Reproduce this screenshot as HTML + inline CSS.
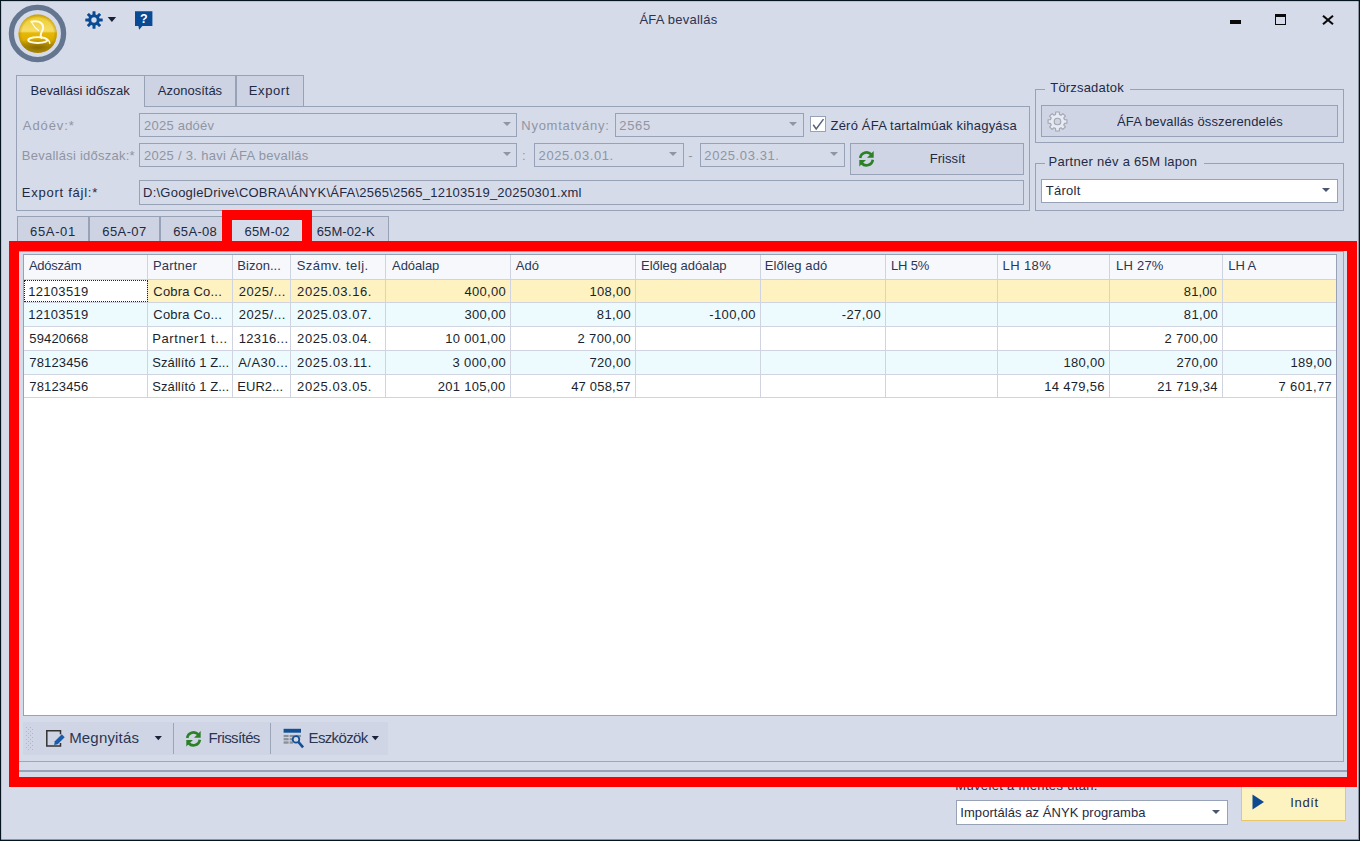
<!DOCTYPE html>
<html lang="hu">
<head>
<meta charset="utf-8">
<title>ÁFA bevallás</title>
<style>
*{box-sizing:border-box;margin:0;padding:0}
html,body{width:1360px;height:841px;overflow:hidden}
body{background:#d6dbe9;font-family:"Liberation Sans",sans-serif;font-size:13px;color:#1e2a44;position:relative}
.a{position:absolute}
.t{position:absolute;white-space:nowrap;line-height:16px;height:16px;transform:scaleY(1.05);transform-origin:0 12.5px}
.dis{color:#8f95a3}
.hdc{color:#2a3655}
.cel{color:#1a1f2e}
.bx{position:absolute;border:1px solid #97a2b6}
.fld{position:absolute;border:1px solid #97a2b6;background:#d6dbe9}
.btn{position:absolute;border:1px solid #97a2b6;background:#cfd5e4}
.wh{background:#fff}
.arr{position:absolute;width:0;height:0;border-left:4px solid transparent;border-right:4px solid transparent;border-top:4px solid #8f95a3}
.arr.dk{border-top-color:#4a566e}
#frame{left:0;top:0;width:1360px;height:841px;border:1px solid #06141f;box-shadow:inset -1px -1px 0 0 rgba(6,20,31,0.35), inset 1px 1px 0 0 rgba(6,20,31,0.12);pointer-events:none;z-index:50}
.tab{position:absolute;border:1px solid #97a2b6;border-bottom:none;background:#cdd3e2}
.tab.act{background:#d6dbe9}
#grid{left:23px;top:254px;width:1314px;height:462px;border:1px solid #97a2b6;background:#fff;overflow:hidden}
.row{position:absolute;left:0;width:1312px;border-bottom:1px solid #cfd4e0}
.c{position:absolute;top:0;height:100%;border-right:1px solid #cfd4e0}
.tb{font-size:15px;line-height:18px;height:18px;color:#2b3653;transform:none}
.red{position:absolute;background:#fe0000;z-index:40}
</style>
</head>
<body>
<svg class="a" style="left:6px;top:2px" width="64" height="64" viewBox="0 0 64 64">
  <defs>
    <linearGradient id="gold" x1="0" y1="0" x2="0" y2="1">
      <stop offset="0" stop-color="#e6be15"/>
      <stop offset="0.12" stop-color="#f0cf38"/>
      <stop offset="0.40" stop-color="#f5dc66"/>
      <stop offset="0.44" stop-color="#f3d856"/>
      <stop offset="0.48" stop-color="#e6b808"/>
      <stop offset="0.66" stop-color="#dcae02"/>
      <stop offset="0.85" stop-color="#c29a03"/>
      <stop offset="1" stop-color="#cfa70a"/>
    </linearGradient>
    <radialGradient id="goldedge" cx="0.5" cy="0.5" r="0.5">
      <stop offset="0.82" stop-color="#a07c00" stop-opacity="0"/>
      <stop offset="1" stop-color="#a07c00" stop-opacity="0.5"/>
    </radialGradient>
    <radialGradient id="goldshade" cx="0.5" cy="0.86" r="0.42" gradientTransform="translate(0.5 0.86) scale(1.5 0.55) translate(-0.5 -0.86)">
      <stop offset="0" stop-color="#6f5600" stop-opacity="0.7"/>
      <stop offset="1" stop-color="#6f5600" stop-opacity="0"/>
    </radialGradient>
  </defs>
  <circle cx="31.5" cy="31.5" r="26.1" fill="none" stroke="#64768f" stroke-width="5.3"/>
  <circle cx="31.7" cy="31.8" r="19.2" fill="url(#gold)"/>
  <circle cx="31.7" cy="31.8" r="19.2" fill="url(#goldshade)"/>
  <circle cx="31.7" cy="31.8" r="19.2" fill="url(#goldedge)"/>
  <path d="M25.3 19.7c3.500-0.600 7.500-0.400 9.600 1.200c2.300 1.800 2.600 4.300 1.800 6.800c-0.800 2.400-2.600 4-2 6.500c0.200 0.900 0.500 1.400 0.800 1.800" fill="none" stroke="#fffbe8" stroke-width="2" stroke-linecap="round"/>
  <path d="M25.3 19.7c0.300 1.200 0.800 1.900 1.500 2.500c1.300 2.500 3.300 4.600 5.700 6.300" fill="none" stroke="#fffbe8" stroke-width="1.100" stroke-linecap="round"/>
  <ellipse cx="31.7" cy="38.1" rx="9.6" ry="2.9" fill="none" stroke="#fffbe8" stroke-width="1.800"/>
  <path d="M40.2 36.900c2 0.700 3.400 2.300 3.700 4.500" fill="none" stroke="#fffbe8" stroke-width="1.300" stroke-linecap="round"/>
</svg>
<svg class="a" style="left:83.700px;top:9.850px" width="20" height="20" viewBox="0 0 20 20">
  <g fill="#084a94">
    <circle cx="10" cy="10" r="5.800"/>
    <rect x="8.500" y="1.300" width="3" height="17.400" rx="0.500"/>
    <rect x="8.500" y="1.300" width="3" height="17.400" rx="0.500" transform="rotate(45 10 10)"/>
    <rect x="8.500" y="1.300" width="3" height="17.400" rx="0.500" transform="rotate(90 10 10)"/>
    <rect x="8.500" y="1.300" width="3" height="17.400" rx="0.500" transform="rotate(135 10 10)"/>
  </g>
  <circle cx="10" cy="10" r="2.700" fill="#d6dbe9"/>
</svg>
<svg class="a" style="left:107px;top:16px" width="10" height="7" viewBox="0 0 10 7"><path d="M0.700 1h8.400l-4.200 5z" fill="#1a2238"/></svg>
<svg class="a" style="left:135px;top:11px" width="18" height="20" viewBox="0 0 18 20">
  <path d="M0 0.200h17.400v14.700h-10l-3.300 3.800l-0.700-3.800h-3.400z" fill="#084a94"/>
  <text x="8.800" y="12.200" text-anchor="middle" font-family="Liberation Sans, sans-serif" font-weight="bold" font-size="12.500" fill="#fff">?</text>
</svg>
<div class="a" style="left:1230px;top:20px;width:11px;height:4px;background:#0a0a0a"></div>
<div class="a" style="left:1275px;top:14px;width:11px;height:11px;border:1px solid #0a0a0a;border-top-width:3px"></div>
<svg class="a" style="left:1322px;top:14.500px" width="12" height="10" viewBox="0 0 12 10"><path d="M1 0.800l10 8.400M11 0.800l-10 8.400" stroke="#0a0a0a" stroke-width="2.100" fill="none"/></svg>
<div class="bx" style="left:16px;top:106px;width:1014px;height:105px"></div>
<div class="tab act" style="left:16px;top:75px;width:129px;height:32px"></div>
<div class="tab" style="left:144px;top:75px;width:92px;height:31px"></div>
<div class="tab" style="left:236px;top:75px;width:68px;height:31px"></div>
<div class="fld" style="left:139px;top:113px;width:378px;height:24px"></div>
<div class="arr" style="left:503px;top:122px"></div>
<div class="fld" style="left:615px;top:113px;width:189px;height:24px"></div>
<div class="arr" style="left:789px;top:122px"></div>
<div class="a wh" style="left:810px;top:116px;width:16px;height:16px;border:1px solid #97a2b6"></div>
<svg class="a" style="left:810px;top:116px" width="16" height="16" viewBox="0 0 16 16"><path d="M3.200 8.700l3 4.200l7.300-9.800" fill="none" stroke="#56617c" stroke-width="1.500"/></svg>
<div class="fld" style="left:139px;top:143px;width:378px;height:24px"></div>
<div class="arr" style="left:503px;top:152px"></div>
<div class="fld" style="left:534px;top:143px;width:150px;height:24px"></div>
<div class="arr" style="left:669px;top:152px"></div>
<div class="fld" style="left:700px;top:143px;width:145px;height:24px"></div>
<div class="arr" style="left:830px;top:152px"></div>
<div class="btn" style="left:850px;top:143px;width:174px;height:32px"></div>
<svg class="a" style="left:856.7px;top:149.7px" width="19" height="17.7" viewBox="0 0 16 16"><g fill="none" stroke="#2c8026" stroke-width="2.400"><path d="M2.300 7.200a5.800 5.800 0 0 1 10-3.200"/><path d="M13.700 8.800a5.800 5.800 0 0 1-10 3.200"/></g><path d="M14.500 1v6h-6z" fill="#2c8026"/><path d="M1.500 15v-6h6z" fill="#2c8026"/></svg>
<div class="fld" style="left:139px;top:180px;width:885px;height:25px"></div>
<div class="bx" style="left:1035px;top:89px;width:309px;height:54px"></div>
<div class="a" style="left:1045px;top:88px;width:85px;height:3px;background:#d6dbe9"></div>
<div class="btn" style="left:1041px;top:105px;width:297px;height:32px"></div>
<svg class="a" style="left:1047px;top:110.500px" width="21" height="21" viewBox="0 0 21 21"><path d="M8.58 3.56L8.69 1.07L12.31 1.07L12.42 3.56L14.05 4.24L15.88 2.55L18.45 5.12L16.76 6.95L17.44 8.58L19.93 8.69L19.93 12.31L17.44 12.42L16.76 14.05L18.45 15.88L15.88 18.45L14.05 16.76L12.42 17.44L12.31 19.93L8.69 19.93L8.58 17.44L6.95 16.76L5.12 18.45L2.55 15.88L4.24 14.05L3.56 12.42L1.07 12.31L1.07 8.69L3.56 8.58L4.24 6.95L2.55 5.12L5.12 2.55L6.95 4.24z" fill="#e6ebf6" stroke="#a3a5ae" stroke-width="1.100" stroke-linejoin="round"/><circle cx="10.500" cy="10.500" r="3.300" fill="#cfd5e4" stroke="#a3a5ae" stroke-width="1.100"/></svg>
<div class="bx" style="left:1035px;top:163px;width:309px;height:48px"></div>
<div class="a" style="left:1045px;top:162px;width:159px;height:3px;background:#d6dbe9"></div>
<div class="fld wh" style="left:1041px;top:179px;width:297px;height:24px"></div>
<div class="arr dk" style="left:1322px;top:188px;border-left-width:4.500px;border-right-width:4.500px;border-top-width:4.500px"></div>
<div class="tab" style="left:17px;top:216px;width:72px;height:36px"></div>
<div class="tab" style="left:89px;top:216px;width:71px;height:36px"></div>
<div class="tab" style="left:160px;top:216px;width:72px;height:36px"></div>
<div class="tab act" style="left:230px;top:216px;width:73px;height:36px"></div>
<div class="tab" style="left:311px;top:216px;width:78px;height:36px"></div>
<div class="bx" style="left:17px;top:251px;width:1327px;height:511px;border-color:#9ca7ba"></div><div class="a" style="left:17px;top:770px;width:1330px;height:2px;background:#98a3b7"></div>
<div id="grid" class="a">
<div class="row" style="top:0;height:25px;background:#f7f8fc">
<div class="c" style="left:0px;width:124px"></div>
<div class="c" style="left:124px;width:85px"></div>
<div class="c" style="left:209px;width:58px"></div>
<div class="c" style="left:267px;width:95px"></div>
<div class="c" style="left:362px;width:125px"></div>
<div class="c" style="left:487px;width:125px"></div>
<div class="c" style="left:612px;width:125px"></div>
<div class="c" style="left:737px;width:125px"></div>
<div class="c" style="left:862px;width:112px"></div>
<div class="c" style="left:974px;width:112px"></div>
<div class="c" style="left:1086px;width:113px"></div>
<div class="c" style="left:1199px;width:114px"></div>
</div>
<div class="row" style="top:25px;height:23px;background:#fef2c0">
<div class="c" style="left:0px;width:124px;background:#fff;outline:1px dotted #222;outline-offset:-1px"></div>
<div class="c" style="left:124px;width:85px"></div>
<div class="c" style="left:209px;width:58px"></div>
<div class="c" style="left:267px;width:95px"></div>
<div class="c" style="left:362px;width:125px"></div>
<div class="c" style="left:487px;width:125px"></div>
<div class="c" style="left:612px;width:125px"></div>
<div class="c" style="left:737px;width:125px"></div>
<div class="c" style="left:862px;width:112px"></div>
<div class="c" style="left:974px;width:112px"></div>
<div class="c" style="left:1086px;width:113px"></div>
<div class="c" style="left:1199px;width:114px"></div>
</div>
<div class="row" style="top:48px;height:24px;background:#edfbff">
<div class="c" style="left:0px;width:124px"></div>
<div class="c" style="left:124px;width:85px"></div>
<div class="c" style="left:209px;width:58px"></div>
<div class="c" style="left:267px;width:95px"></div>
<div class="c" style="left:362px;width:125px"></div>
<div class="c" style="left:487px;width:125px"></div>
<div class="c" style="left:612px;width:125px"></div>
<div class="c" style="left:737px;width:125px"></div>
<div class="c" style="left:862px;width:112px"></div>
<div class="c" style="left:974px;width:112px"></div>
<div class="c" style="left:1086px;width:113px"></div>
<div class="c" style="left:1199px;width:114px"></div>
</div>
<div class="row" style="top:72px;height:24px;background:#ffffff">
<div class="c" style="left:0px;width:124px"></div>
<div class="c" style="left:124px;width:85px"></div>
<div class="c" style="left:209px;width:58px"></div>
<div class="c" style="left:267px;width:95px"></div>
<div class="c" style="left:362px;width:125px"></div>
<div class="c" style="left:487px;width:125px"></div>
<div class="c" style="left:612px;width:125px"></div>
<div class="c" style="left:737px;width:125px"></div>
<div class="c" style="left:862px;width:112px"></div>
<div class="c" style="left:974px;width:112px"></div>
<div class="c" style="left:1086px;width:113px"></div>
<div class="c" style="left:1199px;width:114px"></div>
</div>
<div class="row" style="top:96px;height:24px;background:#edfbff">
<div class="c" style="left:0px;width:124px"></div>
<div class="c" style="left:124px;width:85px"></div>
<div class="c" style="left:209px;width:58px"></div>
<div class="c" style="left:267px;width:95px"></div>
<div class="c" style="left:362px;width:125px"></div>
<div class="c" style="left:487px;width:125px"></div>
<div class="c" style="left:612px;width:125px"></div>
<div class="c" style="left:737px;width:125px"></div>
<div class="c" style="left:862px;width:112px"></div>
<div class="c" style="left:974px;width:112px"></div>
<div class="c" style="left:1086px;width:113px"></div>
<div class="c" style="left:1199px;width:114px"></div>
</div>
<div class="row" style="top:120px;height:23px;background:#ffffff">
<div class="c" style="left:0px;width:124px"></div>
<div class="c" style="left:124px;width:85px"></div>
<div class="c" style="left:209px;width:58px"></div>
<div class="c" style="left:267px;width:95px"></div>
<div class="c" style="left:362px;width:125px"></div>
<div class="c" style="left:487px;width:125px"></div>
<div class="c" style="left:612px;width:125px"></div>
<div class="c" style="left:737px;width:125px"></div>
<div class="c" style="left:862px;width:112px"></div>
<div class="c" style="left:974px;width:112px"></div>
<div class="c" style="left:1086px;width:113px"></div>
<div class="c" style="left:1199px;width:114px"></div>
</div>
</div>
<div class="a" style="left:23px;top:722px;width:365px;height:33px;background:#cfd5e4"></div>
<svg class="a" style="left:26px;top:727px" width="7" height="23" viewBox="0 0 7 23"><g fill="#aeb7c9"><rect x="0" y="0" width="1" height="1"/><rect x="4" y="0" width="1" height="1"/><rect x="2" y="2" width="1" height="1"/><rect x="6" y="2" width="1" height="1"/><rect x="0" y="4" width="1" height="1"/><rect x="4" y="4" width="1" height="1"/><rect x="2" y="6" width="1" height="1"/><rect x="6" y="6" width="1" height="1"/><rect x="0" y="8" width="1" height="1"/><rect x="4" y="8" width="1" height="1"/><rect x="2" y="10" width="1" height="1"/><rect x="6" y="10" width="1" height="1"/><rect x="0" y="12" width="1" height="1"/><rect x="4" y="12" width="1" height="1"/><rect x="2" y="14" width="1" height="1"/><rect x="6" y="14" width="1" height="1"/><rect x="0" y="16" width="1" height="1"/><rect x="4" y="16" width="1" height="1"/><rect x="2" y="18" width="1" height="1"/><rect x="6" y="18" width="1" height="1"/><rect x="0" y="20" width="1" height="1"/><rect x="4" y="20" width="1" height="1"/><rect x="2" y="22" width="1" height="1"/><rect x="6" y="22" width="1" height="1"/></g></svg>
<svg class="a" style="left:45px;top:729px" width="21" height="19" viewBox="0 0 21 19"><path d="M15.500 5.200v-3.500h-13.700v15.400h13.700v-3" fill="none" stroke="#333" stroke-width="1.500"/><path d="M16.800 5.300l2.900 2.900l-7 7l-3.600 0.800l0.700-3.700z" fill="#1a5ca8"/></svg>
<svg class="a" style="left:154px;top:735px" width="9" height="6" viewBox="0 0 9 6"><path d="M0.700 1h7.200l-3.600 4.200z" fill="#1a2238"/></svg>
<div class="a" style="left:173px;top:723px;width:1px;height:31px;background:#9aa5b8"></div>
<svg class="a" style="left:184.2px;top:729.8px" width="19" height="17.7" viewBox="0 0 16 16"><g fill="none" stroke="#2c8026" stroke-width="2.400"><path d="M2.300 7.200a5.800 5.800 0 0 1 10-3.200"/><path d="M13.700 8.800a5.800 5.800 0 0 1-10 3.200"/></g><path d="M14.500 1v6h-6z" fill="#2c8026"/><path d="M1.500 15v-6h6z" fill="#2c8026"/></svg>
<div class="a" style="left:270px;top:723px;width:1px;height:31px;background:#9aa5b8"></div>
<svg class="a" style="left:283px;top:728px" width="22" height="21" viewBox="0 0 22 21"><rect x="0.600" y="0.800" width="17.400" height="3.900" fill="#134f94"/><g fill="#8a8f98"><rect x="0.600" y="6.900" width="5" height="2.200"/><rect x="6.600" y="6.900" width="5" height="2.200"/><rect x="12.600" y="6.900" width="5.400" height="2.200"/><rect x="0.600" y="10.100" width="5" height="2.200"/><rect x="6.600" y="10.100" width="3" height="2.200"/><rect x="0.600" y="13.400" width="5" height="2.300"/><rect x="6.600" y="13.400" width="3.500" height="2.300"/></g><circle cx="13" cy="11.400" r="3.300" fill="#d3d9e7" stroke="#134f94" stroke-width="1.800"/><path d="M15.300 13.900l4.800 5.500" stroke="#134f94" stroke-width="2.600" fill="none"/></svg>
<svg class="a" style="left:370.500px;top:735px" width="9" height="6" viewBox="0 0 9 6"><path d="M0.700 1h7.200l-3.600 4.200z" fill="#1a2238"/></svg>
<div class="red" style="left:9px;top:241px;width:1348px;height:10px"></div>
<div class="red" style="left:9px;top:777px;width:1348px;height:10px"></div>
<div class="red" style="left:9px;top:241px;width:10px;height:546px"></div>
<div class="red" style="left:1347px;top:241px;width:10px;height:546px"></div>
<div class="red" style="left:222px;top:210px;width:90px;height:10px"></div>
<div class="red" style="left:222px;top:210px;width:10px;height:32px"></div>
<div class="red" style="left:302px;top:210px;width:10px;height:32px"></div>
<div class="fld wh" style="left:956px;top:800px;width:272px;height:25px"></div>
<div class="arr dk" style="left:1212px;top:810px;border-left-width:4.500px;border-right-width:4.500px;border-top-width:4.500px"></div>
<div class="a" style="left:1241px;top:780px;width:105px;height:41px;background:#fdf3c0;border:1px solid #e8c66a"></div>
<svg class="a" style="left:1252px;top:794px" width="13" height="16" viewBox="0 0 13 16"><path d="M0.500 0.500l11.500 7.500l-11.500 7.500z" fill="#0d4a8f"/></svg>
<div id="frame" class="a"></div>
<div id="t0" class="t" style="left:639.40px;top:11.80px;letter-spacing:0.236px;color:#2b3350">ÁFA bevallás</div>
<div id="t1" class="t" style="left:30.55px;top:82.50px;letter-spacing:-0.032px">Bevallási időszak</div>
<div id="t2" class="t" style="left:157.80px;top:82.50px">Azonosítás</div>
<div id="t3" class="t" style="left:248.80px;top:82.50px;letter-spacing:0.600px">Export</div>
<div id="t4" class="t dis" style="left:22.80px;top:117.50px;letter-spacing:0.917px">Adóév:*</div>
<div id="t5" class="t dis" style="left:144.05px;top:117.50px;letter-spacing:0.222px">2025 adóév</div>
<div id="t6" class="t dis" style="left:521.30px;top:117.50px;letter-spacing:0.727px">Nyomtatvány:</div>
<div id="t7" class="t dis" style="left:619.30px;top:117.50px;letter-spacing:0.667px">2565</div>
<div id="t8" class="t" style="left:830.55px;top:117.50px;letter-spacing:0.196px">Zéró ÁFA tartalmúak kihagyása</div>
<div id="t9" class="t dis" style="left:21.80px;top:147.50px;letter-spacing:0.250px">Bevallási időszak:*</div>
<div id="t10" class="t dis" style="left:144.05px;top:147.50px;letter-spacing:0.288px">2025 / 3. havi ÁFA bevallás</div>
<div id="t11" class="t dis" style="left:521.90px;top:147.50px">:</div>
<div id="t12" class="t dis" style="left:538.55px;top:147.50px;letter-spacing:0.600px">2025.03.01.</div>
<div id="t13" class="t dis" style="left:688.30px;top:147.50px">-</div>
<div id="t14" class="t dis" style="left:704.30px;top:147.50px;letter-spacing:0.600px">2025.03.31.</div>
<div id="t15" class="t" style="left:929.80px;top:151.25px">Frissít</div>
<div id="t16" class="t" style="left:21.80px;top:184.50px;letter-spacing:0.750px">Export fájl:*</div>
<div id="t17" class="t" style="left:143.05px;top:184.50px;letter-spacing:0.225px">D:\GoogleDrive\COBRA\ÁNYK\ÁFA\2565\2565_12103519_20250301.xml</div>
<div id="t18" class="t" style="left:1050.30px;top:80.00px;letter-spacing:0.180px">Törzsadatok</div>
<div id="t19" class="t" style="left:1117.00px;top:114.00px;letter-spacing:0.128px">ÁFA bevallás összerendelés</div>
<div id="t20" class="t" style="left:1048.50px;top:153.75px;letter-spacing:0.282px">Partner név a 65M lapon</div>
<div id="t21" class="t" style="left:1045.70px;top:183.10px;letter-spacing:0.280px">Tárolt</div>
<div id="t22" class="t" style="left:30.10px;top:223.50px;letter-spacing:0.640px">65A-01</div>
<div id="t23" class="t" style="left:102.30px;top:223.50px;letter-spacing:0.400px">65A-07</div>
<div id="t24" class="t" style="left:173.30px;top:223.50px;letter-spacing:0.320px">65A-08</div>
<div id="t25" class="t" style="left:244.50px;top:223.50px;letter-spacing:0.200px">65M-02</div>
<div id="t26" class="t" style="left:316.70px;top:223.50px;letter-spacing:0.115px">65M-02-K</div>
<div id="t27" class="t hdc" style="left:28.90px;top:257.80px;letter-spacing:-0.234px">Adószám</div>
<div id="t28" class="t hdc" style="left:152.90px;top:257.80px;letter-spacing:0.200px">Partner</div>
<div id="t29" class="t hdc" style="left:237.30px;top:257.80px;letter-spacing:0.029px">Bizon...</div>
<div id="t30" class="t hdc" style="left:296.70px;top:257.80px;letter-spacing:0.473px">Számv. telj.</div>
<div id="t31" class="t hdc" style="left:392.05px;top:257.80px;letter-spacing:-0.084px">Adóalap</div>
<div id="t32" class="t hdc" style="left:515.85px;top:257.80px">Adó</div>
<div id="t33" class="t hdc" style="left:641.05px;top:257.80px;letter-spacing:-0.039px">Előleg adóalap</div>
<div id="t34" class="t hdc" style="left:764.80px;top:257.80px;letter-spacing:0.112px">Előleg adó</div>
<div id="t35" class="t hdc" style="left:891.05px;top:257.80px;letter-spacing:-0.176px">LH 5%</div>
<div id="t36" class="t hdc" style="left:1002.50px;top:257.80px;letter-spacing:0.400px">LH 18%</div>
<div id="t37" class="t hdc" style="left:1116.05px;top:257.80px;letter-spacing:0.220px">LH 27%</div>
<div id="t38" class="t hdc" style="left:1228.35px;top:257.80px;letter-spacing:-0.100px">LH A</div>
<div id="t39" class="t cel" style="left:28.30px;top:283.50px;letter-spacing:0.286px">12103519</div>
<div id="t40" class="t cel" style="left:153.30px;top:283.50px;letter-spacing:0.200px">Cobra Co...</div>
<div id="t41" class="t cel" style="left:238.70px;top:283.50px;letter-spacing:0.486px">2025/...</div>
<div id="t42" class="t cel" style="left:297.10px;top:283.50px;letter-spacing:0.560px">2025.03.16.</div>
<div id="t43" class="t cel" style="left:464.55px;top:283.50px;letter-spacing:0.260px">400,00</div>
<div id="t44" class="t cel" style="left:589.55px;top:283.50px;letter-spacing:0.260px">108,00</div>
<div id="t45" class="t cel" style="left:1183.87px;top:283.50px;letter-spacing:0.106px">81,00</div>
<div id="t46" class="t cel" style="left:28.30px;top:307.20px;letter-spacing:0.286px">12103519</div>
<div id="t47" class="t cel" style="left:153.30px;top:307.20px;letter-spacing:0.200px">Cobra Co...</div>
<div id="t48" class="t cel" style="left:238.70px;top:307.20px;letter-spacing:0.486px">2025/...</div>
<div id="t49" class="t cel" style="left:297.10px;top:307.20px;letter-spacing:0.560px">2025.03.07.</div>
<div id="t50" class="t cel" style="left:464.55px;top:307.20px;letter-spacing:0.260px">300,00</div>
<div id="t51" class="t cel" style="left:596.87px;top:307.20px;letter-spacing:0.356px">81,00</div>
<div id="t52" class="t cel" style="left:709.35px;top:307.20px;letter-spacing:0.350px">-100,00</div>
<div id="t53" class="t cel" style="left:841.67px;top:307.20px;letter-spacing:0.444px">-27,00</div>
<div id="t54" class="t cel" style="left:1183.87px;top:307.20px;letter-spacing:0.356px">81,00</div>
<div id="t55" class="t cel" style="left:29.30px;top:331.00px;letter-spacing:0.143px">59420668</div>
<div id="t56" class="t cel" style="left:152.30px;top:331.00px;letter-spacing:0.583px">Partner1 t...</div>
<div id="t57" class="t cel" style="left:238.70px;top:331.00px;letter-spacing:0.343px">12316...</div>
<div id="t58" class="t cel" style="left:297.10px;top:331.00px;letter-spacing:0.560px">2025.03.04.</div>
<div id="t59" class="t cel" style="left:445.16px;top:331.00px;letter-spacing:0.319px">10 001,00</div>
<div id="t60" class="t cel" style="left:577.48px;top:331.00px;letter-spacing:0.382px">2 700,00</div>
<div id="t61" class="t cel" style="left:1164.48px;top:331.00px;letter-spacing:0.382px">2 700,00</div>
<div id="t62" class="t cel" style="left:29.30px;top:355.10px;letter-spacing:0.143px">78123456</div>
<div id="t63" class="t cel" style="left:152.30px;top:355.10px;letter-spacing:0.071px">Szállító 1 Z...</div>
<div id="t64" class="t cel" style="left:238.20px;top:355.10px;letter-spacing:0.486px">A/A30...</div>
<div id="t65" class="t cel" style="left:297.10px;top:355.10px;letter-spacing:0.660px">2025.03.11.</div>
<div id="t66" class="t cel" style="left:452.48px;top:355.10px;letter-spacing:0.382px">3 000,00</div>
<div id="t67" class="t cel" style="left:589.55px;top:355.10px;letter-spacing:0.260px">720,00</div>
<div id="t68" class="t cel" style="left:1063.55px;top:355.10px;letter-spacing:0.260px">180,00</div>
<div id="t69" class="t cel" style="left:1176.55px;top:355.10px;letter-spacing:0.260px">270,00</div>
<div id="t70" class="t cel" style="left:1290.55px;top:355.10px;letter-spacing:0.260px">189,00</div>
<div id="t71" class="t cel" style="left:29.30px;top:378.50px;letter-spacing:0.143px">78123456</div>
<div id="t72" class="t cel" style="left:152.30px;top:378.50px;letter-spacing:0.071px">Szállító 1 Z...</div>
<div id="t73" class="t cel" style="left:237.20px;top:378.50px;letter-spacing:0.067px">EUR2...</div>
<div id="t74" class="t cel" style="left:297.10px;top:378.50px;letter-spacing:0.560px">2025.03.05.</div>
<div id="t75" class="t cel" style="left:437.84px;top:378.50px;letter-spacing:0.271px">201 105,00</div>
<div id="t76" class="t cel" style="left:571.16px;top:378.50px;letter-spacing:0.194px">47 058,57</div>
<div id="t77" class="t cel" style="left:1044.16px;top:378.50px;letter-spacing:0.319px">14 479,56</div>
<div id="t78" class="t cel" style="left:1157.16px;top:378.50px;letter-spacing:0.319px">21 719,34</div>
<div id="t79" class="t cel" style="left:1278.48px;top:378.50px;letter-spacing:0.382px">7 601,77</div>
<div id="t80" class="t tb" style="left:69.20px;top:728.90px;letter-spacing:0.175px">Megnyitás</div>
<div id="t81" class="t tb" style="left:208.50px;top:728.90px;letter-spacing:-0.600px">Frissítés</div>
<div id="t82" class="t tb" style="left:308.50px;top:728.90px;letter-spacing:-0.629px">Eszközök</div>
<div id="t83" class="t" style="left:955.30px;top:778.00px;letter-spacing:0.333px">Művelet a mentés után:</div>
<div id="t84" class="t" style="left:960.30px;top:804.50px;letter-spacing:0.059px">Importálás az ÁNYK programba</div>
<div id="t85" class="t" style="left:1290.30px;top:794.50px;letter-spacing:0.650px">Indít</div>
</body>
</html>
